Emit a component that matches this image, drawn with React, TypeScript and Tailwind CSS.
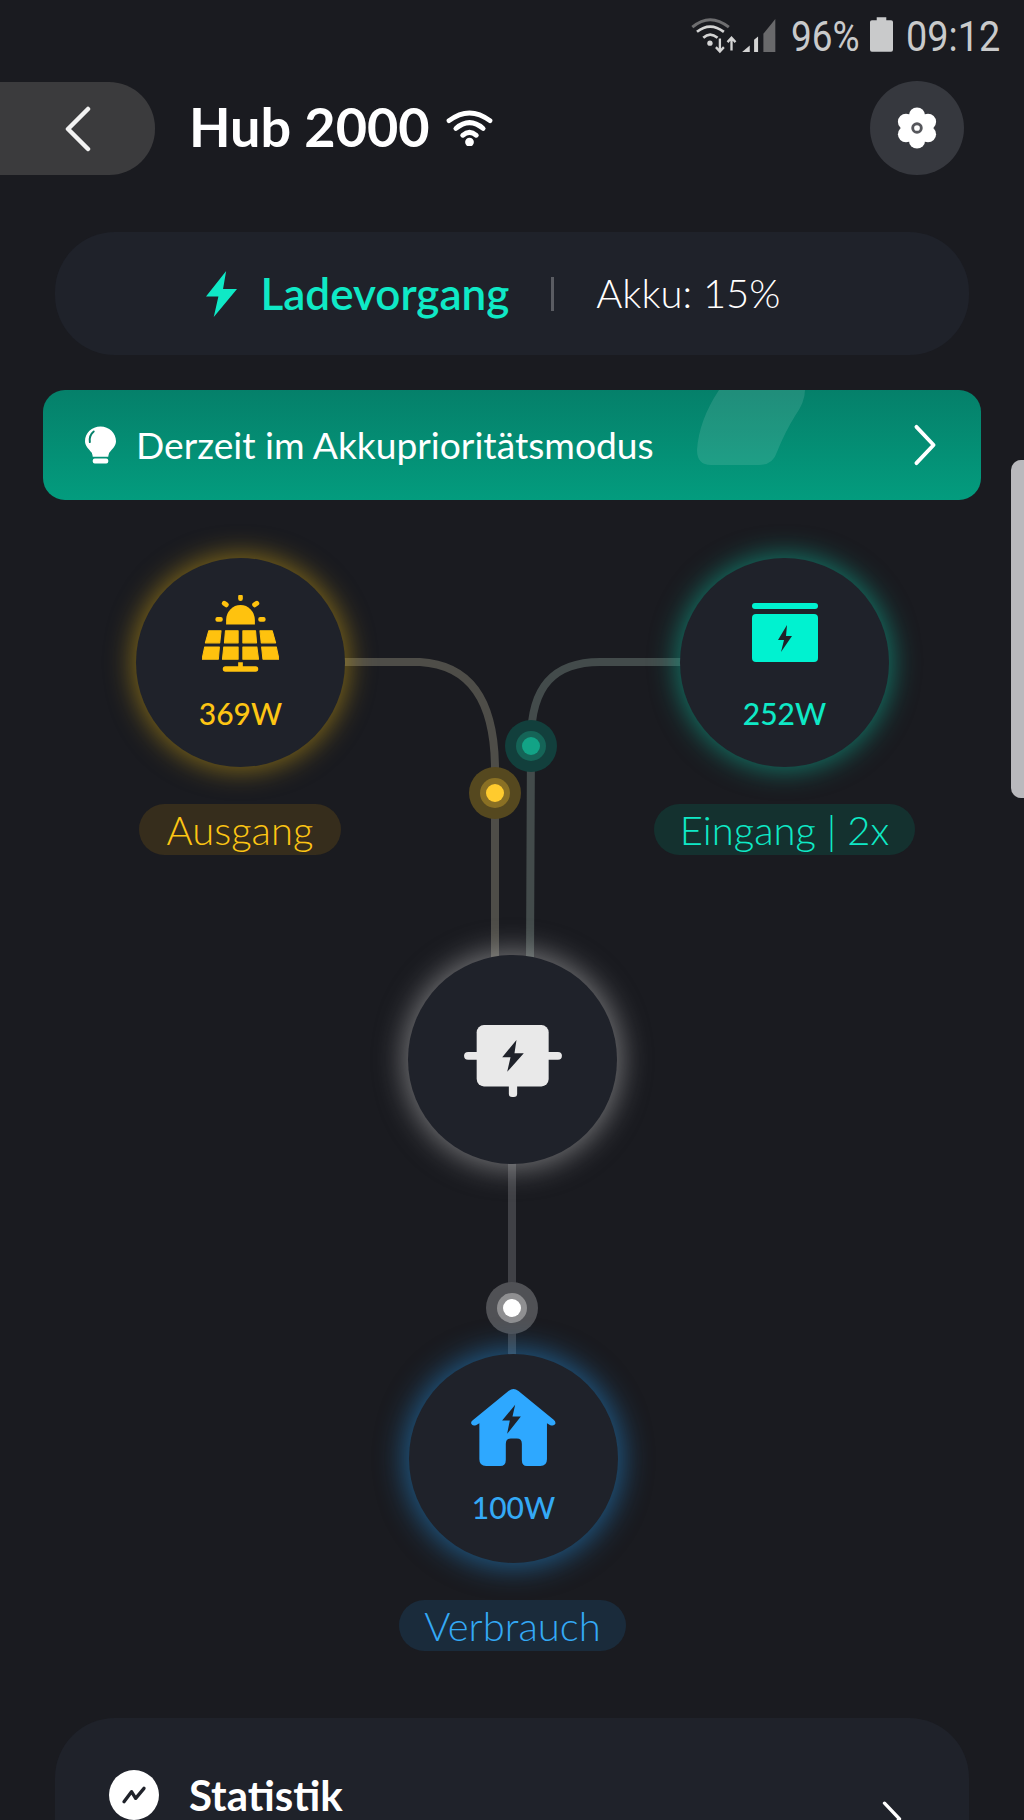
import React from "react";

const Chevron = ({ className }: { className?: string }) => (
  <svg viewBox="0 0 24 44" className={className} fill="none" stroke="currentColor" strokeWidth="4" strokeLinecap="round" strokeLinejoin="round">
    <path d="M3 3 L21 22 L3 41" />
  </svg>
);

const Node = ({ left, top, glow, children }: { left: number; top: number; glow: string; children: React.ReactNode }) => (
  <div
    className={`absolute flex h-[209px] w-[209px] flex-col items-center rounded-full bg-[#1f222a] ${glow}`}
    style={{ left, top }}
  >
    {children}
  </div>
);

const Dot = ({ x, y, outer, ring, core }: { x: number; y: number; outer: string; ring: string; core: string }) => (
  <div className={`absolute flex h-[52px] w-[52px] items-center justify-center rounded-full ${outer}`} style={{ left: x - 26, top: y - 26 }}>
    <div className={`flex h-[30px] w-[30px] items-center justify-center rounded-full ${ring}`}>
      <div className={`h-[18px] w-[18px] rounded-full ${core}`} />
    </div>
  </div>
);

const Pill = ({ left, top, width, className, children }: { left: number; top: number; width: number; className: string; children: React.ReactNode }) => (
  <div
    className={`absolute flex h-[51px] items-center justify-center rounded-full text-[40px] font-light leading-none ${className}`}
    style={{ left, top, width }}
  >
    {children}
  </div>
);

export default function App() {
  return (
    <div className="h-[1820px] w-[1024px] overflow-hidden bg-[#1a1b20] font-['Lato',sans-serif] text-white">
      {/* status bar */}
      <div className="flex h-[80px] items-start justify-end pr-[26px] pt-[14px] text-[#c9cacb]">
        <svg viewBox="95 50 262 110" className="mt-[3px] h-[37px] w-[87px]" fill="none">
          <path d="M102 80 Q155 35 212 80" stroke="#6e6e70" strokeWidth="9" />
          <path d="M116 94 Q155 62 197 94" stroke="#d4d4d4" strokeWidth="8" />
          <path d="M135 112 Q155 93 178 112" stroke="#d4d4d4" strokeWidth="8" />
          <circle cx="155" cy="128" r="8" fill="#d4d4d4" />
          <path d="M185 114 V153 M173 140 L185 153 L197 140 M220 150 V112 M208 125 L220 112 L232 125" stroke="#d4d4d4" strokeWidth="7" />
          <path d="M252 155 L275 135 V155 Z" fill="#d4d4d4" />
          <path d="M288 155 V118 L300 108 V155 Z" fill="#d4d4d4" />
          <path d="M316 155 V100 L352 55 V155 Z" fill="#69696b" />
        </svg>
        <span className="ml-[14px] w-[66px] origin-left scale-x-[0.88] whitespace-nowrap font-['Roboto',sans-serif] text-[42px] leading-[46px]">96%</span>
        <svg viewBox="0 0 24 36" className="ml-[13px] mt-[3px] h-[35px] w-[23px]" fill="#c9cacb">
          <path d="M7 0 H17 V3 H22 Q24 3 24 5 V34 Q24 36 22 36 H2 Q0 36 0 34 V5 Q0 3 2 3 H7 Z" />
        </svg>
        <span className="ml-[13px] w-[92px] origin-left scale-x-[0.9] whitespace-nowrap font-['Roboto',sans-serif] text-[42px] leading-[46px]">09:12</span>
      </div>

      {/* header */}
      <div className="flex h-[95px] items-center pr-[60px]">
        <div className="mt-[2px] flex h-[93px] w-[155px] items-center rounded-r-[46px] bg-[#3b3b3d] pl-[65px]">
          <svg viewBox="0 0 26 46" className="h-[46px] w-[26px]" fill="none" stroke="#f2f2f2" strokeWidth="4.5" strokeLinecap="round" strokeLinejoin="round">
            <path d="M23 3 L3 23 L23 43" />
          </svg>
        </div>
        <span className="ml-[34px] -mt-[2px] text-[54px] font-bold leading-none">Hub 2000</span>
        <svg viewBox="0 0 48 38" className="ml-[16px] h-[37px] w-[47px]" fill="none" stroke="#fff" strokeWidth="5" strokeLinecap="round">
          <path d="M3 12 Q24 -4 45 12" />
          <path d="M10 20 Q24 8 38 20" />
          <path d="M17 27 Q24 21 31 27" />
          <circle cx="24" cy="34" r="2" fill="#fff" />
        </svg>
        <div className="ml-auto flex h-[94px] w-[94px] items-center justify-center rounded-full bg-[#36383e]">
          <svg viewBox="0 0 44 44" className="h-[42px] w-[42px]">
            <g fill="#fff">
              <circle cx="22" cy="9" r="8.5" />
              <circle cx="33.5" cy="15.5" r="8.5" />
              <circle cx="33.5" cy="28.5" r="8.5" />
              <circle cx="22" cy="35" r="8.5" />
              <circle cx="10.5" cy="28.5" r="8.5" />
              <circle cx="10.5" cy="15.5" r="8.5" />
              <circle cx="22" cy="22" r="12" />
            </g>
            <circle cx="22" cy="22" r="4.5" fill="none" stroke="#55565b" strokeWidth="3" />
          </svg>
        </div>
      </div>

      {/* status card */}
      <div className="mx-[55px] mt-[57px] flex h-[123px] items-center justify-center rounded-[60px] bg-[#1f222a] pr-[38px]">
        <svg viewBox="2 0 20 36" preserveAspectRatio="none" className="h-[46px] w-[31px] text-[#0fe9c6]" fill="currentColor">
          <path d="M15 0 L2 20 L10 20 L7 36 L22 14 L13 14 Z" />
        </svg>
        <span className="ml-[24px] -mt-[2px] text-[44px] font-semibold leading-none text-[#0fe9c6]">Ladevorgang</span>
        <div className="ml-[42px] h-[34px] w-[3px] bg-[#5a5c62]" />
        <span className="ml-[42px] -mt-[2px] text-[40px] font-light leading-none">Akku: 15%</span>
      </div>

      {/* banner */}
      <div className="relative mx-[43px] mt-[35px] flex h-[110px] items-center overflow-hidden rounded-[22px] bg-gradient-to-b from-[#05806a] to-[#039c7e] pl-[42px] pr-[44px]">
        <svg viewBox="0 0 108 75" className="absolute left-[654px] top-0 h-[75px] w-[108px]" fill="#ffffff" fillOpacity="0.11">
          <path d="M22 0 H108 Q108 12 98 26 Q88 42 80 62 Q76 75 62 75 H14 Q0 75 0 60 Q2 30 22 0 Z" />
        </svg>
        <svg viewBox="0 0 32 38" className="h-[38px] w-[31px]" fill="#fff">
          <path d="M16 0 C25 0 32 7 32 15 C32 20 28 23 25 27 Q24 30 24 31 H8 Q8 30 7 27 C4 23 0 20 0 15 C0 7 7 0 16 0 Z" />
          <path d="M9 5 Q4 9 5 16" fill="none" stroke="#05806a" strokeWidth="2" strokeLinecap="round" />
          <rect x="8" y="33" width="16" height="5" rx="2" />
        </svg>
        <span className="ml-[20px] text-[37.2px] font-normal leading-none">Derzeit im Akkuprioritätsmodus</span>
        <Chevron className="ml-auto h-[42px] w-[24px] text-white" />
      </div>

      {/* diagram */}
      <div className="relative h-[1218px] w-full">
        <svg viewBox="0 0 1024 1218" className="absolute inset-0 h-[1218px] w-[1024px]" fill="none" strokeWidth="8">
          <path d="M340 162 H420 C470 165 495 200 495 270 V460" stroke="#4e4d48" />
          <path d="M684 162 H600 C555 162 531 185 531 240 L530 460" stroke="#434b4b" />
          <path d="M512 660 V860" stroke="#404146" />
        </svg>

        <Dot x={531} y={246} outer="bg-[#123f3c]" ring="bg-[#156457]" core="bg-[#12a386]" />
        <Dot x={495} y={293} outer="bg-[#55481f]" ring="bg-[#8a7024]" core="bg-[#ffcb2e]" />
        <Dot x={512} y={808} outer="bg-[#505155]" ring="bg-[#8f8f91]" core="bg-white" />

        <Node left={136} top={58} glow="shadow-[0_0_26px_4px_rgba(190,150,20,0.6)]">
          <svg viewBox="305 195 230 230" className="mt-[37px] h-[77px] w-[77px]" fill="#ffc20e">
            <path d="M377 283 V270 A43 45 0 0 1 463 270 V283 Z" />
            <rect x="413" y="193" width="14" height="20" rx="7" />
            <rect x="364" y="214" width="22" height="15" rx="7" transform="rotate(35 374 221)" />
            <rect x="454" y="214" width="22" height="15" rx="7" transform="rotate(-35 466 221)" />
            <rect x="345" y="261" width="22" height="14" rx="6" />
            <rect x="473" y="261" width="22" height="14" rx="6" />
            <path d="M325 302 H362 L358 338 H315 Z M375 302 H413 V338 H372 Z M427 302 H465 L468 338 H427 Z M478 302 H515 L525 338 H482 Z" stroke="#ffc20e" strokeWidth="3" strokeLinejoin="round" />
            <path d="M313 350 H357 L354 387 H305 Z M370 350 H413 V387 H366 Z M427 350 H469 L474 387 H427 Z M483 350 H527 L535 387 H487 Z" stroke="#ffc20e" strokeWidth="3" strokeLinejoin="round" />
            <path d="M413 396 H427 V408 H465 Q473 408 473 416 Q473 424 465 424 H375 Q367 424 367 416 Q367 408 375 408 H413 Z" />
          </svg>
          <span className="mt-[26px] text-[30px] font-medium leading-none text-[#fdc514]">369W</span>
        </Node>

        <Node left={680} top={58} glow="shadow-[0_0_26px_4px_rgba(16,160,135,0.65)]">
          <svg viewBox="0 0 66 59" className="mt-[45px] h-[59px] w-[66px]" fill="#00f2d0">
            <rect x="0" y="0" width="66" height="6" rx="3" />
            <rect x="0" y="11" width="66" height="48" rx="4" />
            <path d="M35 22 L26 37 L32 37 L29 49 L40 33 L34 33 Z" fill="#1f222a" />
          </svg>
          <span className="mt-[36px] text-[30px] font-medium leading-none text-[#0fe9c6]">252W</span>
        </Node>

        <Node left={408} top={455} glow="shadow-[0_0_28px_5px_rgba(200,200,200,0.5)]">
          <svg viewBox="250 285 295 217" className="mt-[70px] h-[72px] w-[98px]">
            <rect x="288" y="285" width="217" height="185" rx="22" fill="#e9e9e9" />
            <rect x="250" y="366" width="295" height="24" rx="12" fill="#e9e9e9" />
            <rect x="385" y="460" width="25" height="42" rx="10" fill="#e9e9e9" />
            <path d="M408 330 L365 382 L390 382 L380 426 L430 370 L402 370 Z" fill="#1f222a" />
          </svg>
        </Node>

        <Node left={409} top={854} glow="shadow-[0_0_28px_5px_rgba(35,130,200,0.6)]">
          <svg viewBox="268 388 254 230" className="mt-[35px] h-[77px] w-[85px]">
            <path d="M395 388 Q402 388 410 394 L515 480 Q522 486 520 492 Q516 500 505 496 L495 490 V598 Q495 618 475 618 H435 Q420 618 420 600 V552 Q420 536 405 536 H387 Q372 536 372 552 V600 Q372 618 355 618 H313 Q293 618 293 598 V490 L283 496 Q272 500 269 492 Q266 486 275 480 L380 394 Q388 388 395 388 Z" fill="#2ea8ff" />
            <path d="M400 435 L361 482 L384 482 L376 522 L417 470 L392 470 Z" fill="#1f222a" />
          </svg>
          <span className="mt-[26px] text-[30px] font-medium leading-none text-[#34a9f5]">100W</span>
        </Node>

        <Pill left={139} top={304} width={202} className="bg-[#362d1c] text-[#fdc514]">Ausgang</Pill>
        <Pill left={654} top={304} width={261} className="bg-[#14312f] text-[#0fe9c6]">Eingang | 2x</Pill>
        <Pill left={399} top={1100} width={227} className="bg-[#1a2b3b] text-[#34a9f5]">Verbrauch</Pill>

        {/* scrollbar */}
        <div className="absolute right-0 top-[-40px] h-[338px] w-[13px] rounded-l-[10px] bg-[#b9b9bd]" />
      </div>

      {/* Statistik */}
      <div className="mx-[55px] flex h-[160px] items-start rounded-t-[60px] bg-[#1f222a] pl-[54px] pr-[67px] pt-[52px]">
        <div className="flex h-[50px] w-[50px] items-center justify-center rounded-full bg-white">
          <svg viewBox="0 0 30 24" className="h-[20px] w-[26px]" fill="none" stroke="#1f222a" strokeWidth="4" strokeLinecap="round" strokeLinejoin="round">
            <path d="M3 20 L12 8 L17 16 L27 4" />
          </svg>
        </div>
        <span className="ml-[30px] text-[42px] font-bold leading-[50px]">Statistik</span>
        <Chevron className="ml-auto mt-[28px] h-[42px] w-[20px] text-white" />
      </div>
    </div>
  );
}
